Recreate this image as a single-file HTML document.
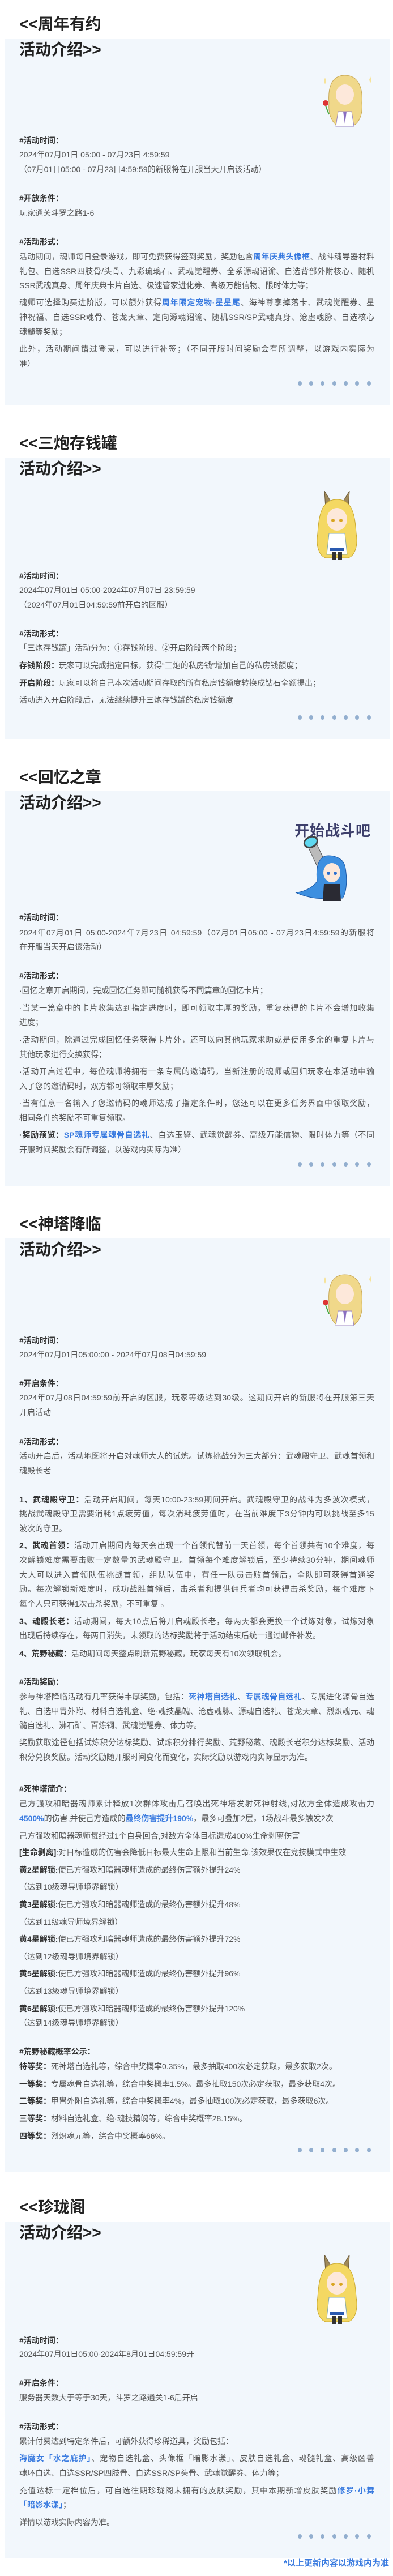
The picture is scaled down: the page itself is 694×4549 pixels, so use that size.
<!DOCTYPE html>
<html><head><meta charset="utf-8">
<style>
*{margin:0;padding:0;box-sizing:border-box}
body{width:694px;height:4549px;position:relative;background:#fff;font-family:"Liberation Sans","Noto Sans CJK SC",sans-serif;overflow:hidden}
.p{position:absolute;left:8px;width:680px;background:#f2f7fc}
.h{position:absolute;left:34px;font-size:28px;font-weight:bold;line-height:36px;height:36px;color:#222;white-space:nowrap}
.l{position:absolute;left:34px;width:627px;height:26px;line-height:26px;font-size:14px;color:#555;white-space:nowrap}
.j{text-align:justify;text-align-last:justify}
.l b,.bb{font-weight:bold;color:#333}
.l a{color:#3a7be0;font-weight:bold;text-decoration:none}
.d{position:absolute;left:526px;width:135px;height:8px}
.d i{position:absolute;top:0;width:7px;height:8px;border-radius:50%;background:#93afcf}
.c{position:absolute}
.f{position:absolute;right:7px;top:4516px;font-size:15px;font-weight:bold;color:#3a7be0;line-height:22px}
</style></head><body>

<!-- Section 1 -->
<div class="h" style="top:25px">&lt;&lt;周年有约</div>
<div class="p" style="top:68px;height:648px"></div>
<div class="h" style="top:70px">活动介绍&gt;&gt;</div>
<svg class="c" style="left:559px;top:127px" width="100" height="100" viewBox="0 0 100 100">
<path d="M50 6 C25 6 20 30 22 55 C20 75 28 92 40 96 L62 96 C75 92 82 75 80 55 C82 30 75 6 50 6Z" fill="#f0d88a" stroke="#c9a957"/>
<ellipse cx="50" cy="40" rx="16" ry="18" fill="#fde8da"/>
<path d="M38 70 L62 70 L66 96 L34 96Z" fill="#fff" stroke="#9b86c2"/>
<path d="M47 70 L50 92 L53 70Z" fill="#8a6fc0"/>
<circle cx="16" cy="55" r="5" fill="#d33"/><path d="M16 60 L22 75" stroke="#4a4" stroke-width="2"/>
<path d="M15 10 l2 6 l-2 6 l-2 -6z M95 8 l2 6 l-2 6 l-2 -6z" fill="#f6e39a"/>
</svg>
<div class="l bb" style="top:235px">#活动时间：</div>
<div class="l" style="top:260px">2024年07月01日 05:00 - 07月23日 4:59:59</div>
<div class="l" style="top:286px">（07月01日05:00 - 07月23日4:59:59的新服将在开服当天开启该活动）</div>
<div class="l bb" style="top:337px">#开放条件：</div>
<div class="l" style="top:363px">玩家通关斗罗之路1-6</div>
<div class="l bb" style="top:414px">#活动形式：</div>
<div class="l j" style="top:440px">活动期间，魂师每日登录游戏，即可免费获得签到奖励，奖励包含<a>周年庆典头像框</a>、战斗魂导器材料</div>
<div class="l j" style="top:466px">礼包、自选SSR四肢骨/头骨、九彩琉璃石、武魂觉醒券、全系源魂诏谕、自选背部外附核心、随机</div>
<div class="l" style="top:491px">SSR武魂真身、周年庆典卡片自选、极速管家进化券、高级万能信物、限时体力等；</div>
<div class="l j" style="top:521px">魂师可选择购买进阶版，可以额外获得<a>周年限定宠物·星星尾</a>、海神尊享掉落卡、武魂觉醒券、星</div>
<div class="l j" style="top:547px">神祝福、自选SSR魂骨、苍龙天章、定向源魂诏谕、随机SSR/SP武魂真身、沧虚魂脉、自选核心</div>
<div class="l" style="top:573px">魂髓等奖励；</div>
<div class="l j" style="top:603px">此外，活动期间错过登录，可以进行补签；（不同开服时间奖励会有所调整，以游戏内实际为</div>
<div class="l" style="top:629px">准）</div>
<div class="d" style="top:673px"><i style="left:0"></i><i style="left:20px"></i><i style="left:40px"></i><i style="left:61px"></i><i style="left:81px"></i><i style="left:101px"></i><i style="left:122px"></i></div>

<!-- Section 2 -->
<div class="h" style="top:765px">&lt;&lt;三炮存钱罐</div>
<div class="p" style="top:808px;height:497px"></div>
<div class="h" style="top:810px">活动介绍&gt;&gt;</div>
<svg class="c" style="left:545px;top:867px" width="100" height="123" viewBox="0 0 100 123">
<path d="M30 30 L28 0 L40 20Z M70 30 L72 0 L60 20Z" fill="#a08a5a" stroke="#6b5a3a"/>
<path d="M50 15 C22 15 18 45 16 75 C12 100 20 115 30 118 L70 118 C80 115 88 100 84 75 C82 45 78 15 50 15Z" fill="#f4d862" stroke="#c9a830"/>
<ellipse cx="50" cy="50" rx="18" ry="20" fill="#fde8da"/>
<circle cx="43" cy="52" r="3" fill="#d9a520"/><circle cx="57" cy="52" r="3" fill="#d9a520"/>
<path d="M36 75 L64 75 L68 112 L32 112Z" fill="#fff" stroke="#8aa"/>
<rect x="38" y="100" width="24" height="6" fill="#2a5ab0"/>
<rect x="42" y="108" width="7" height="14" fill="#333"/><rect x="52" y="108" width="7" height="14" fill="#333"/>
</svg>
<div class="l bb" style="top:1004px">#活动时间：</div>
<div class="l" style="top:1029px">2024年07月01日 05:00-2024年07月07日 23:59:59</div>
<div class="l" style="top:1055px">（2024年07月01日04:59:59前开启的区服）</div>
<div class="l bb" style="top:1106px">#活动形式：</div>
<div class="l" style="top:1131px">「三炮存钱罐」活动分为：①存钱阶段、②开启阶段两个阶段；</div>
<div class="l" style="top:1162px"><b>存钱阶段：</b>玩家可以完成指定目标，获得“三炮的私房钱”增加自己的私房钱额度；</div>
<div class="l" style="top:1193px"><b>开启阶段：</b>玩家可以将自己本次活动期间存取的所有私房钱额度转换成钻石全额提出；</div>
<div class="l" style="top:1223px">活动进入开启阶段后，无法继续提升三炮存钱罐的私房钱额度</div>
<div class="d" style="top:1263px"><i style="left:0"></i><i style="left:20px"></i><i style="left:40px"></i><i style="left:61px"></i><i style="left:81px"></i><i style="left:101px"></i><i style="left:122px"></i></div>

<!-- Section 3 -->
<div class="h" style="top:1355px">&lt;&lt;回忆之章</div>
<div class="p" style="top:1397px;height:697px"></div>
<div class="h" style="top:1400px">活动介绍&gt;&gt;</div>
<div class="c" style="left:520px;top:1447px;font-size:26px;font-weight:bold;color:#3d3f6b;letter-spacing:1px;font-family:'WenQuanYi Zen Hei','Noto Sans CJK SC',sans-serif">开始战斗吧</div>
<svg class="c" style="left:520px;top:1476px" width="110" height="118" viewBox="0 0 110 118">
<g transform="rotate(-25 40 30)"><rect x="30" y="5" width="16" height="55" rx="4" fill="#bbb" stroke="#555"/><ellipse cx="38" cy="8" rx="12" ry="9" fill="#5fd8f0" stroke="#444" stroke-width="3"/></g>
<path d="M60 35 C40 35 38 60 40 80 C30 95 10 100 2 100 C20 108 40 112 55 110 L85 110 C95 95 92 60 88 50 C84 40 72 35 60 35Z" fill="#3d8fe0" stroke="#1d5aa8"/>
<ellipse cx="66" cy="65" rx="15" ry="17" fill="#fde8da"/>
<circle cx="60" cy="66" r="3" fill="#2a6fd0"/><circle cx="72" cy="66" r="3" fill="#2a6fd0"/>
<path d="M52 85 L80 85 L82 115 L50 115Z" fill="#2a2a33"/>
</svg>
<div class="l bb" style="top:1607px">#活动时间：</div>
<div class="l j" style="top:1634px">2024年07月01日 05:00-2024年7月23日 04:59:59（07月01日05:00 - 07月23日4:59:59的新服将</div>
<div class="l" style="top:1659px">在开服当天开启该活动）</div>
<div class="l bb" style="top:1710px">#活动形式：</div>
<div class="l" style="top:1736px">·回忆之章开启期间，完成回忆任务即可随机获得不同篇章的回忆卡片；</div>
<div class="l j" style="top:1767px">·当某一篇章中的卡片收集达到指定进度时，即可领取丰厚的奖励，重复获得的卡片不会增加收集</div>
<div class="l" style="top:1792px">进度；</div>
<div class="l j" style="top:1823px">·活动期间，除通过完成回忆任务获得卡片外，还可以向其他玩家求助或是使用多余的重复卡片与</div>
<div class="l" style="top:1849px">其他玩家进行交换获得；</div>
<div class="l j" style="top:1879px">·活动开启过程中，每位魂师将拥有一条专属的邀请码，当新注册的魂师或回归玩家在本活动中输</div>
<div class="l" style="top:1905px">入了您的邀请码时，双方都可领取丰厚奖励；</div>
<div class="l j" style="top:1935px">·当有任意一名输入了您邀请码的魂师达成了指定条件时，您还可以在更多任务界面中领取奖励，</div>
<div class="l" style="top:1961px">相同条件的奖励不可重复领取。</div>
<div class="l j" style="top:1991px"><b>·奖励预览：</b><a>SP魂师专属魂骨自选礼</a>、自选玉鉴、武魂觉醒券、高级万能信物、限时体力等（不同</div>
<div class="l" style="top:2017px">开服时间奖励会有所调整，以游戏内实际为准）</div>
<div class="d" style="top:2052px"><i style="left:0"></i><i style="left:20px"></i><i style="left:40px"></i><i style="left:61px"></i><i style="left:81px"></i><i style="left:101px"></i><i style="left:122px"></i></div>

<!-- Section 4 -->
<div class="h" style="top:2144px">&lt;&lt;神塔降临</div>
<div class="p" style="top:2186px;height:1650px"></div>
<div class="h" style="top:2189px">活动介绍&gt;&gt;</div>
<svg class="c" style="left:559px;top:2245px" width="100" height="100" viewBox="0 0 100 100">
<path d="M50 6 C25 6 20 30 22 55 C20 75 28 92 40 96 L62 96 C75 92 82 75 80 55 C82 30 75 6 50 6Z" fill="#f0d88a" stroke="#c9a957"/>
<ellipse cx="50" cy="40" rx="16" ry="18" fill="#fde8da"/>
<path d="M38 70 L62 70 L66 96 L34 96Z" fill="#fff" stroke="#9b86c2"/>
<path d="M47 70 L50 92 L53 70Z" fill="#8a6fc0"/>
<circle cx="16" cy="55" r="5" fill="#d33"/><path d="M16 60 L22 75" stroke="#4a4" stroke-width="2"/>
<path d="M15 10 l2 6 l-2 6 l-2 -6z M95 8 l2 6 l-2 6 l-2 -6z" fill="#f6e39a"/>
</svg>
<div class="l bb" style="top:2354px">#活动时间：</div>
<div class="l" style="top:2379px">2024年07月01日05:00:00 - 2024年07月08日04:59:59</div>
<div class="l bb" style="top:2430px">#开启条件：</div>
<div class="l j" style="top:2455px">2024年07月08日04:59:59前开启的区服，玩家等级达到30级。这期间开启的新服将在开服第三天</div>
<div class="l" style="top:2481px">开启活动</div>
<div class="l bb" style="top:2533px">#活动形式：</div>
<div class="l j" style="top:2558px">活动开启后，活动地图将开启对魂师大人的试炼。试炼挑战分为三大部分：武魂殿守卫、武魂首领和</div>
<div class="l" style="top:2584px">魂殿长老</div>
<div class="l j" style="top:2635px"><b>1、武魂殿守卫：</b>活动开启期间，每天10:00-23:59期间开启。武魂殿守卫的战斗为多波次模式，</div>
<div class="l j" style="top:2660px">挑战武魂殿守卫需要消耗1点疲劳值，每次消耗疲劳值时，在当前难度下3分钟内可以挑战至多15</div>
<div class="l" style="top:2686px">波次的守卫。</div>
<div class="l j" style="top:2716px"><b>2、武魂首领：</b>活动开启期间内每天会出现一个首领代替前一天首领，每个首领共有10个难度，每</div>
<div class="l j" style="top:2742px">次解锁难度需要击败一定数量的武魂殿守卫。首领每个难度解锁后，至少持续30分钟，期间魂师</div>
<div class="l j" style="top:2768px">大人可以进入首领队伍挑战首领，组队队伍中，有任一队员击败首领后，全队即可获得首通奖</div>
<div class="l j" style="top:2793px">励。每次解锁新难度时，成功战胜首领后，击杀者和提供佣兵者均可获得击杀奖励，每个难度下</div>
<div class="l" style="top:2819px">每个人只可获得1次击杀奖励，不可重复 。</div>
<div class="l j" style="top:2850px"><b>3、魂殿长老：</b>活动期间，每天10点后将开启魂殿长老，每两天都会更换一个试炼对象，试炼对象</div>
<div class="l" style="top:2875px">出现后持续存在，每两日消失，未领取的达标奖励将于活动结束后统一通过邮件补发。</div>
<div class="l" style="top:2907px"><b>4、荒野秘藏：</b>活动期间每天整点刷新荒野秘藏，玩家每天有10次领取机会。</div>
<div class="l bb" style="top:2957px">#活动奖励：</div>
<div class="l j" style="top:2983px">参与神塔降临活动有几率获得丰厚奖励，包括：<a>死神塔自选礼</a>、<a>专属魂骨自选礼</a>、专属进化源骨自选</div>
<div class="l j" style="top:3009px">礼、自选甲胄外附、材料自选礼盒、绝·魂技晶魄、沧虚魂脉、源魂自选礼、苍龙天章、烈炽魂元、魂</div>
<div class="l" style="top:3034px">髓自选礼、沸石矿、百炼钢、武魂觉醒券、体力等。</div>
<div class="l j" style="top:3064px">奖励获取途径包括试炼积分达标奖励、试炼积分排行奖励、荒野秘藏、魂殿长老积分达标奖励、活动</div>
<div class="l" style="top:3090px">积分兑换奖励。活动奖励随开服时间变化而变化，实际奖励以游戏内实际显示为准。</div>
<div class="l bb" style="top:3146px">#死神塔简介：</div>
<div class="l j" style="top:3172px">己方强攻和暗器魂师累计释放1次群体攻击后召唤出死神塔发射死神射线,对敌方全体造成攻击力</div>
<div class="l" style="top:3198px"><a>4500%</a>的伤害,并使己方造成的<a>最终伤害提升190%</a>，最多可叠加2层，1场战斗最多触发2次</div>
<div class="l" style="top:3229px">己方强攻和暗器魂师每经过1个自身回合,对敌方全体目标造成400%生命剥离伤害</div>
<div class="l" style="top:3258px"><b>[生命剥离]</b>:对目标造成的伤害会降低目标最大生命上限和当前生命,该效果仅在竞技模式中生效</div>
<div class="l" style="top:3289px"><b>黄2星解锁:</b>使已方强攻和暗器魂师造成的最终伤害额外提升24%</div>
<div class="l" style="top:3319px">（达到10级魂导师境界解锁）</div>
<div class="l" style="top:3350px"><b>黄3星解锁:</b>使已方强攻和暗器魂师造成的最终伤害额外提升48%</div>
<div class="l" style="top:3381px">（达到11级魂导师境界解锁）</div>
<div class="l" style="top:3411px"><b>黄4星解锁:</b>使已方强攻和暗器魂师造成的最终伤害额外提升72%</div>
<div class="l" style="top:3442px">（达到12级魂导师境界解锁）</div>
<div class="l" style="top:3472px"><b>黄5星解锁:</b>使已方强攻和暗器魂师造成的最终伤害额外提升96%</div>
<div class="l" style="top:3503px">（达到13级魂导师境界解锁）</div>
<div class="l" style="top:3534px"><b>黄6星解锁:</b>使已方强攻和暗器魂师造成的最终伤害额外提升120%</div>
<div class="l" style="top:3559px">（达到14级魂导师境界解锁）</div>
<div class="l bb" style="top:3610px">#荒野秘藏概率公示：</div>
<div class="l" style="top:3636px"><b>特等奖：</b>死神塔自选礼等，综合中奖概率0.35%，最多抽取400次必定获取，最多获取2次。</div>
<div class="l" style="top:3667px"><b>一等奖：</b>专属魂骨自选礼等，综合中奖概率1.5%。最多抽取150次必定获取，最多获取4次。</div>
<div class="l" style="top:3697px"><b>二等奖：</b>甲胄外附自选礼等，综合中奖概率4%，最多抽取100次必定获取，最多获取6次。</div>
<div class="l" style="top:3728px"><b>三等奖：</b>材料自选礼盒、绝·魂技精魄等，综合中奖概率28.15%。</div>
<div class="l" style="top:3759px"><b>四等奖：</b>烈炽魂元等，综合中奖概率66%。</div>
<div class="d" style="top:3793px"><i style="left:0"></i><i style="left:20px"></i><i style="left:40px"></i><i style="left:61px"></i><i style="left:81px"></i><i style="left:101px"></i><i style="left:122px"></i></div>

<!-- Section 5 -->
<div class="h" style="top:3880px">&lt;&lt;珍珑阁</div>
<div class="p" style="top:3924px;height:594px"></div>
<div class="h" style="top:3925px">活动介绍&gt;&gt;</div>
<svg class="c" style="left:545px;top:3982px" width="100" height="123" viewBox="0 0 100 123">
<path d="M30 30 L28 0 L40 20Z M70 30 L72 0 L60 20Z" fill="#a08a5a" stroke="#6b5a3a"/>
<path d="M50 15 C22 15 18 45 16 75 C12 100 20 115 30 118 L70 118 C80 115 88 100 84 75 C82 45 78 15 50 15Z" fill="#f4d862" stroke="#c9a830"/>
<ellipse cx="50" cy="50" rx="18" ry="20" fill="#fde8da"/>
<circle cx="43" cy="52" r="3" fill="#d9a520"/><circle cx="57" cy="52" r="3" fill="#d9a520"/>
<path d="M36 75 L64 75 L68 112 L32 112Z" fill="#fff" stroke="#8aa"/>
<rect x="38" y="100" width="24" height="6" fill="#2a5ab0"/>
<rect x="42" y="108" width="7" height="14" fill="#333"/><rect x="52" y="108" width="7" height="14" fill="#333"/>
</svg>
<div class="l bb" style="top:4120px">#活动时间：</div>
<div class="l" style="top:4144px">2024年07月01日05:00-2024年8月01日04:59:59开</div>
<div class="l bb" style="top:4195px">#开启条件：</div>
<div class="l" style="top:4221px">服务器天数大于等于30天，斗罗之路通关1-6后开启</div>
<div class="l bb" style="top:4272px">#活动形式：</div>
<div class="l" style="top:4298px">累计付费达到特定条件后，可额外获得珍稀道具，奖励包括：</div>
<div class="l j" style="top:4328px"><a>海魔女「水之庇护」</a>、宠物自选礼盒、头像框「暗影水漾」、皮肤自选礼盒、魂髓礼盒、高级凶兽</div>
<div class="l" style="top:4354px">魂环自选、自选SSR/SP四肢骨、自选SSR/SP头骨、武魂觉醒券、体力等；</div>
<div class="l j" style="top:4385px">充值达标一定档位后，可自选往期珍珑阁未拥有的皮肤奖励，其中本期新增皮肤奖励<a>修罗·小舞</a></div>
<div class="l" style="top:4410px"><a>「暗影水漾」</a>；</div>
<div class="l" style="top:4441px">详情以游戏实际内容为准。</div>
<div class="d" style="top:4475px"><i style="left:0"></i><i style="left:20px"></i><i style="left:40px"></i><i style="left:61px"></i><i style="left:81px"></i><i style="left:101px"></i><i style="left:122px"></i></div>

<div class="f">*以上更新内容以游戏内为准</div>
</body></html>
